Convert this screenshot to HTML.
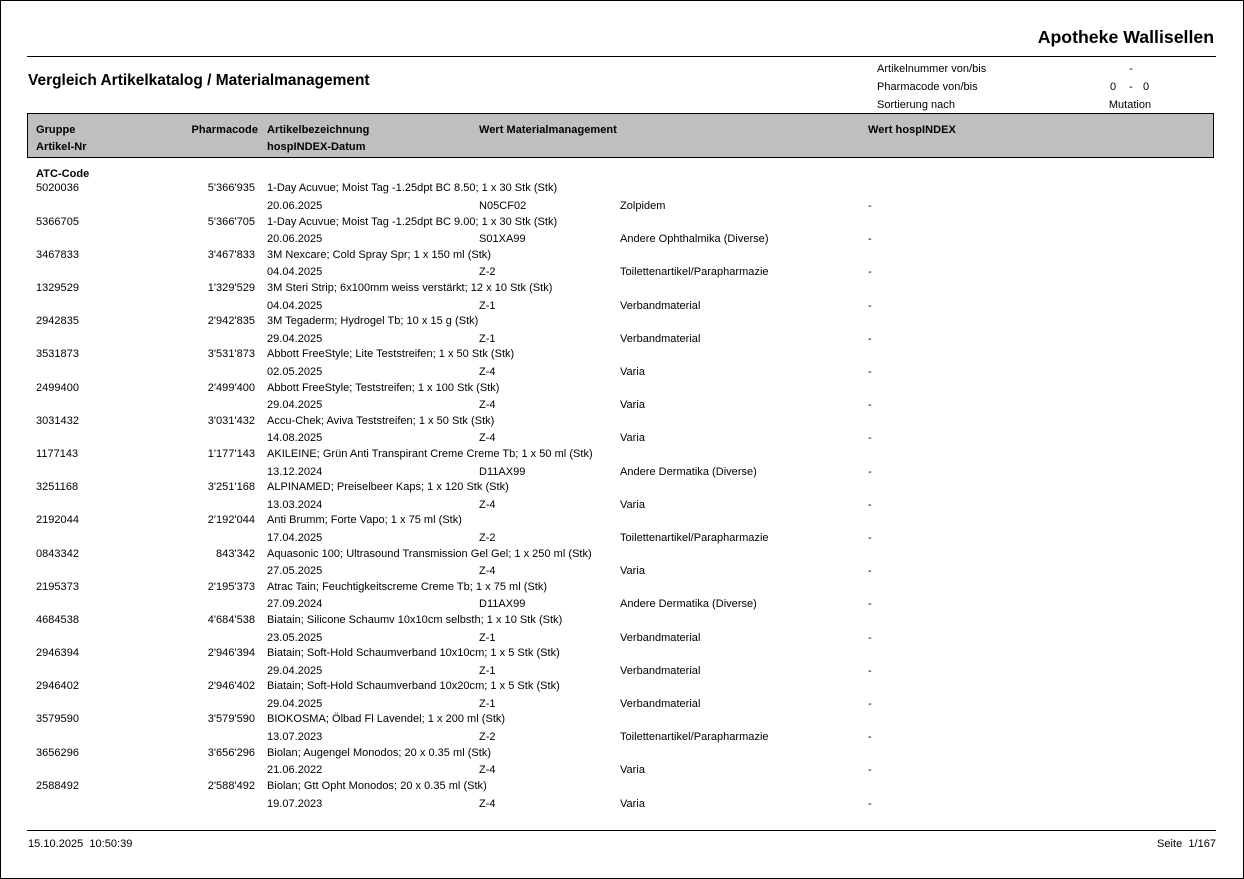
<!DOCTYPE html>
<html lang="de"><head><meta charset="utf-8"><title>Vergleich Artikelkatalog / Materialmanagement</title>
<style>
html,body{margin:0;padding:0;background:#fff}
#p{position:relative;width:1244px;height:879px;overflow:hidden;background:#fff;font-family:"Liberation Sans",Arial,sans-serif;font-size:11px;letter-spacing:.02px;color:#000}
#p div{position:absolute;white-space:pre;line-height:18px;height:18px}
.b{font-weight:bold;letter-spacing:.05px}
.r{text-align:right}
.c{text-align:center}
#p .l{background:#000;height:1px;line-height:0}
</style></head><body><div id="p">
<div style="left:0;top:0;width:1242px;height:877px;border:1px solid #000"></div>
<div class="b r" style="left:900px;width:314px;top:27px;height:20px;line-height:20px;font-size:17.7px;letter-spacing:0">Apotheke Wallisellen</div>
<div class="l" style="left:27px;top:56px;width:1189px"></div>
<div class="b" style="left:28px;top:73px;height:16px;line-height:16px;font-size:15.47px;letter-spacing:0">Vergleich Artikelkatalog / Materialmanagement</div>
<div style="left:877px;top:60px">Artikelnummer von/bis</div>
<div style="left:877px;top:78px">Pharmacode von/bis</div>
<div style="left:877px;top:96px">Sortierung nach</div>
<div class="c" style="left:1091px;width:80px;top:60px">-</div>
<div style="left:1110px;top:78px">0</div><div style="left:1129px;top:78px">-</div><div style="left:1143px;top:78px">0</div>
<div class="c" style="left:1090px;width:80px;top:96px">Mutation</div>
<div style="left:27px;top:113px;width:1185px;height:43px;background:#bfbfbf;border:1px solid #000"></div>
<div class="b" style="left:36px;top:121px">Gruppe</div>
<div class="b" style="left:36px;top:138px">Artikel-Nr</div>
<div class="b r" style="left:158px;width:100px;top:121px">Pharmacode</div>
<div class="b" style="left:267px;top:121px">Artikelbezeichnung</div>
<div class="b" style="left:267px;top:138px">hospINDEX-Datum</div>
<div class="b" style="left:479px;top:121px">Wert Materialmanagement</div>
<div class="b" style="left:868px;top:121px">Wert hospINDEX</div>
<div class="b" style="left:36px;top:165px">ATC-Code</div>

<div style="left:36px;top:179px">5020036</div><div class="r" style="left:155px;width:100px;top:179px">5'366'935</div><div style="left:267px;top:179px">1-Day Acuvue; Moist Tag -1.25dpt BC 8.50; 1 x 30 Stk (Stk)</div>
<div style="left:267px;top:197px">20.06.2025</div><div style="left:479px;top:197px">N05CF02</div><div style="left:620px;top:197px">Zolpidem</div><div style="left:868px;top:197px">-</div>
<div style="left:36px;top:213px">5366705</div><div class="r" style="left:155px;width:100px;top:213px">5'366'705</div><div style="left:267px;top:213px">1-Day Acuvue; Moist Tag -1.25dpt BC 9.00; 1 x 30 Stk (Stk)</div>
<div style="left:267px;top:230px">20.06.2025</div><div style="left:479px;top:230px">S01XA99</div><div style="left:620px;top:230px">Andere Ophthalmika (Diverse)</div><div style="left:868px;top:230px">-</div>
<div style="left:36px;top:246px">3467833</div><div class="r" style="left:155px;width:100px;top:246px">3'467'833</div><div style="left:267px;top:246px">3M Nexcare; Cold Spray Spr; 1 x 150 ml (Stk)</div>
<div style="left:267px;top:263px">04.04.2025</div><div style="left:479px;top:263px">Z-2</div><div style="left:620px;top:263px">Toilettenartikel/Parapharmazie</div><div style="left:868px;top:263px">-</div>
<div style="left:36px;top:279px">1329529</div><div class="r" style="left:155px;width:100px;top:279px">1'329'529</div><div style="left:267px;top:279px">3M Steri Strip; 6x100mm weiss verstärkt; 12 x 10 Stk (Stk)</div>
<div style="left:267px;top:297px">04.04.2025</div><div style="left:479px;top:297px">Z-1</div><div style="left:620px;top:297px">Verbandmaterial</div><div style="left:868px;top:297px">-</div>
<div style="left:36px;top:312px">2942835</div><div class="r" style="left:155px;width:100px;top:312px">2'942'835</div><div style="left:267px;top:312px">3M Tegaderm; Hydrogel Tb; 10 x 15 g (Stk)</div>
<div style="left:267px;top:330px">29.04.2025</div><div style="left:479px;top:330px">Z-1</div><div style="left:620px;top:330px">Verbandmaterial</div><div style="left:868px;top:330px">-</div>
<div style="left:36px;top:345px">3531873</div><div class="r" style="left:155px;width:100px;top:345px">3'531'873</div><div style="left:267px;top:345px">Abbott FreeStyle; Lite Teststreifen; 1 x 50 Stk (Stk)</div>
<div style="left:267px;top:363px">02.05.2025</div><div style="left:479px;top:363px">Z-4</div><div style="left:620px;top:363px">Varia</div><div style="left:868px;top:363px">-</div>
<div style="left:36px;top:379px">2499400</div><div class="r" style="left:155px;width:100px;top:379px">2'499'400</div><div style="left:267px;top:379px">Abbott FreeStyle; Teststreifen; 1 x 100 Stk (Stk)</div>
<div style="left:267px;top:396px">29.04.2025</div><div style="left:479px;top:396px">Z-4</div><div style="left:620px;top:396px">Varia</div><div style="left:868px;top:396px">-</div>
<div style="left:36px;top:412px">3031432</div><div class="r" style="left:155px;width:100px;top:412px">3'031'432</div><div style="left:267px;top:412px">Accu-Chek; Aviva Teststreifen; 1 x 50 Stk (Stk)</div>
<div style="left:267px;top:429px">14.08.2025</div><div style="left:479px;top:429px">Z-4</div><div style="left:620px;top:429px">Varia</div><div style="left:868px;top:429px">-</div>
<div style="left:36px;top:445px">1177143</div><div class="r" style="left:155px;width:100px;top:445px">1'177'143</div><div style="left:267px;top:445px">AKILEINE; Grün Anti Transpirant Creme Creme Tb; 1 x 50 ml (Stk)</div>
<div style="left:267px;top:463px">13.12.2024</div><div style="left:479px;top:463px">D11AX99</div><div style="left:620px;top:463px">Andere Dermatika (Diverse)</div><div style="left:868px;top:463px">-</div>
<div style="left:36px;top:478px">3251168</div><div class="r" style="left:155px;width:100px;top:478px">3'251'168</div><div style="left:267px;top:478px">ALPINAMED; Preiselbeer Kaps; 1 x 120 Stk (Stk)</div>
<div style="left:267px;top:496px">13.03.2024</div><div style="left:479px;top:496px">Z-4</div><div style="left:620px;top:496px">Varia</div><div style="left:868px;top:496px">-</div>
<div style="left:36px;top:511px">2192044</div><div class="r" style="left:155px;width:100px;top:511px">2'192'044</div><div style="left:267px;top:511px">Anti Brumm; Forte Vapo; 1 x 75 ml (Stk)</div>
<div style="left:267px;top:529px">17.04.2025</div><div style="left:479px;top:529px">Z-2</div><div style="left:620px;top:529px">Toilettenartikel/Parapharmazie</div><div style="left:868px;top:529px">-</div>
<div style="left:36px;top:545px">0843342</div><div class="r" style="left:155px;width:100px;top:545px">843'342</div><div style="left:267px;top:545px">Aquasonic 100; Ultrasound Transmission Gel Gel; 1 x 250 ml (Stk)</div>
<div style="left:267px;top:562px">27.05.2025</div><div style="left:479px;top:562px">Z-4</div><div style="left:620px;top:562px">Varia</div><div style="left:868px;top:562px">-</div>
<div style="left:36px;top:578px">2195373</div><div class="r" style="left:155px;width:100px;top:578px">2'195'373</div><div style="left:267px;top:578px">Atrac Tain; Feuchtigkeitscreme Creme Tb; 1 x 75 ml (Stk)</div>
<div style="left:267px;top:595px">27.09.2024</div><div style="left:479px;top:595px">D11AX99</div><div style="left:620px;top:595px">Andere Dermatika (Diverse)</div><div style="left:868px;top:595px">-</div>
<div style="left:36px;top:611px">4684538</div><div class="r" style="left:155px;width:100px;top:611px">4'684'538</div><div style="left:267px;top:611px">Biatain; Silicone Schaumv 10x10cm selbsth; 1 x 10 Stk (Stk)</div>
<div style="left:267px;top:629px">23.05.2025</div><div style="left:479px;top:629px">Z-1</div><div style="left:620px;top:629px">Verbandmaterial</div><div style="left:868px;top:629px">-</div>
<div style="left:36px;top:644px">2946394</div><div class="r" style="left:155px;width:100px;top:644px">2'946'394</div><div style="left:267px;top:644px">Biatain; Soft-Hold Schaumverband 10x10cm; 1 x 5 Stk (Stk)</div>
<div style="left:267px;top:662px">29.04.2025</div><div style="left:479px;top:662px">Z-1</div><div style="left:620px;top:662px">Verbandmaterial</div><div style="left:868px;top:662px">-</div>
<div style="left:36px;top:677px">2946402</div><div class="r" style="left:155px;width:100px;top:677px">2'946'402</div><div style="left:267px;top:677px">Biatain; Soft-Hold Schaumverband 10x20cm; 1 x 5 Stk (Stk)</div>
<div style="left:267px;top:695px">29.04.2025</div><div style="left:479px;top:695px">Z-1</div><div style="left:620px;top:695px">Verbandmaterial</div><div style="left:868px;top:695px">-</div>
<div style="left:36px;top:710px">3579590</div><div class="r" style="left:155px;width:100px;top:710px">3'579'590</div><div style="left:267px;top:710px">BIOKOSMA; Ölbad Fl Lavendel; 1 x 200 ml (Stk)</div>
<div style="left:267px;top:728px">13.07.2023</div><div style="left:479px;top:728px">Z-2</div><div style="left:620px;top:728px">Toilettenartikel/Parapharmazie</div><div style="left:868px;top:728px">-</div>
<div style="left:36px;top:744px">3656296</div><div class="r" style="left:155px;width:100px;top:744px">3'656'296</div><div style="left:267px;top:744px">Biolan; Augengel Monodos; 20 x 0.35 ml (Stk)</div>
<div style="left:267px;top:761px">21.06.2022</div><div style="left:479px;top:761px">Z-4</div><div style="left:620px;top:761px">Varia</div><div style="left:868px;top:761px">-</div>
<div style="left:36px;top:777px">2588492</div><div class="r" style="left:155px;width:100px;top:777px">2'588'492</div><div style="left:267px;top:777px">Biolan; Gtt Opht Monodos; 20 x 0.35 ml (Stk)</div>
<div style="left:267px;top:795px">19.07.2023</div><div style="left:479px;top:795px">Z-4</div><div style="left:620px;top:795px">Varia</div><div style="left:868px;top:795px">-</div>

<div class="l" style="left:27px;top:830px;width:1189px"></div>
<div style="left:28px;top:835px">15.10.2025  10:50:39</div>
<div class="r" style="left:1016px;width:200px;top:835px">Seite  1/167</div>
</div></body></html>
